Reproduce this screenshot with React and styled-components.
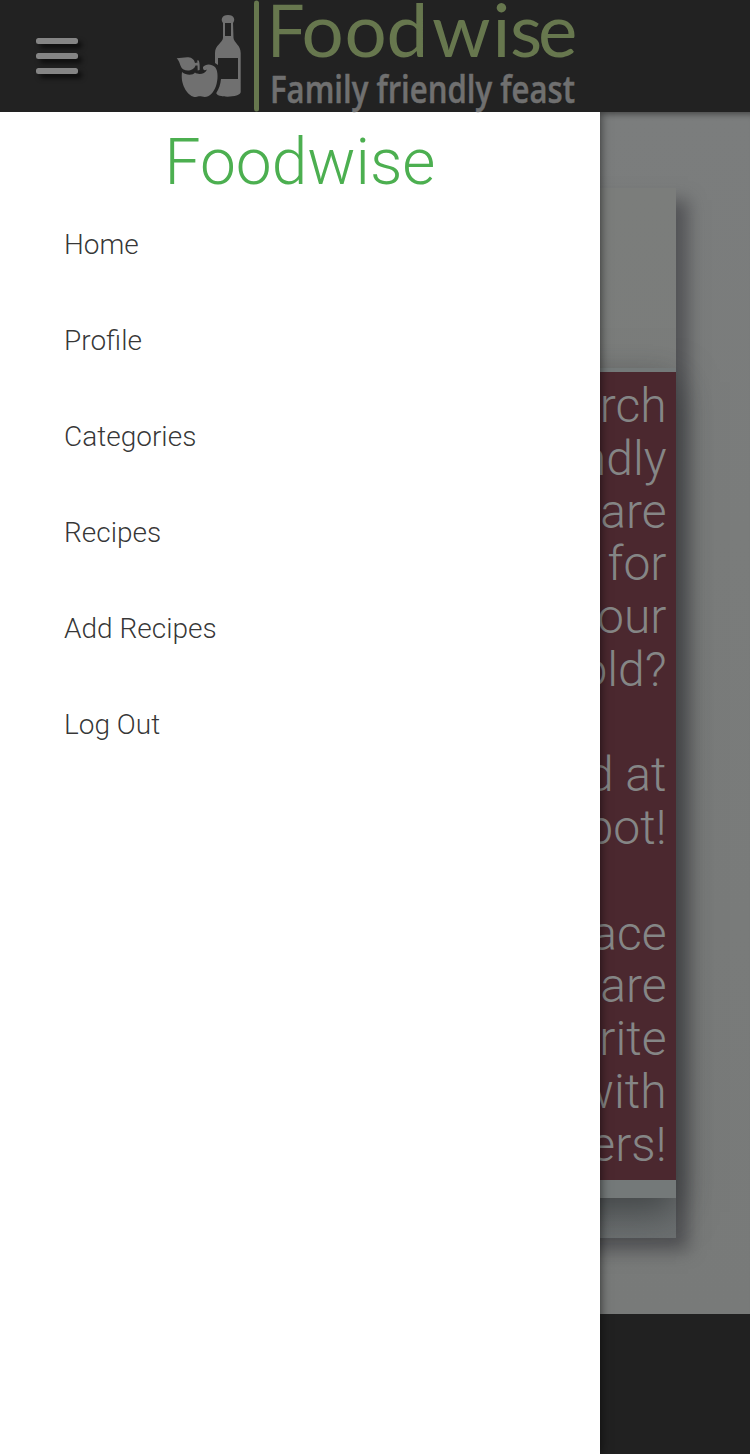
import React from "react";
import styled, { createGlobalStyle } from "styled-components";

const Global = createGlobalStyle`
  *, *::before, *::after { box-sizing: border-box; }
  body { margin: 0; background: #7a7c7b; font-family: Roboto, "Liberation Sans", sans-serif; font-weight: 300; }
`;

const Page = styled.div`
  position: relative;
  display: flex;
  flex-direction: column;
  height: 1454px;
  overflow: hidden;
`;

const Header = styled.header`
  position: relative;
  z-index: 3;
  display: flex;
  align-items: center;
  flex: 0 0 112px;
  padding-left: 36px;
  background: #222;
`;

const MenuButton = styled.button`
  display: flex;
  flex-direction: column;
  gap: 9px;
  width: 42px;
  padding: 0;
  border: 0;
  background: none;
`;

const Bar = styled.span`
  height: 6px;
  border-radius: 2.5px;
  background: #858585;
  box-shadow: 4px 4px 5px rgba(0, 0, 0, 0.65);
`;

const Logo = styled.svg`
  display: block;
  margin-left: 92px;
  overflow: visible;
`;

const Main = styled.main`
  display: flex;
  flex-direction: column;
  flex: 0 0 1202px;
  padding: 76px 74px;
  background: linear-gradient(180deg, #7b7d7d 0%, #7a7c7b 35%, #787a79 100%);
  box-shadow: inset 0 8px 6px -6px rgba(0, 0, 0, 0.45);
`;

const Card = styled.section`
  display: flex;
  flex-direction: column;
  height: 1050px;
  padding: 180px 0 40px;
  background: linear-gradient(180deg, #7b7d7b 0%, #7a7c7c 60%, #6c7071 100%);
  box-shadow: 12px 12px 16px 0 rgba(55, 55, 60, 0.6);
`;

const Panel = styled.div`
  flex: 1;
  padding: 4px 0 18px;
  background: #747979;
  box-shadow: 0 14px 36px rgba(35, 38, 40, 0.6);
`;

const Message = styled.p`
  margin: 0;
  height: 808px;
  padding: 8px 9.5px 8px 8px;
  background: #4b282f;
  color: #858686;
  font-size: 48px;
  line-height: 52.75px;
  text-align: right;
  white-space: pre-line;
`;

const Footer = styled.footer`
  flex: 1;
  background: #212121;
`;

const Drawer = styled.aside`
  position: absolute;
  z-index: 2;
  top: 112px;
  bottom: 0;
  left: 0;
  width: 600px;
  padding-top: 16px;
  background: #fff;
  box-shadow: 0 0 10px rgba(0, 0, 0, 0.65);
`;

const Title = styled.h1`
  margin: 0 0 -2px;
  color: #4caf50;
  font-size: 64px;
  font-weight: 300;
  line-height: 70px;
  text-align: center;
`;

const MenuLink = styled.a`
  display: flex;
  align-items: center;
  height: 96px;
  padding-left: 64px;
  color: rgba(0, 0, 0, 0.8);
  font-size: 28px;
`;

const links = ["Home", "Profile", "Categories", "Recipes", "Add Recipes", "Log Out"];

const message = `search
friendly
are
for
your
household?

found at
spot!

place
share
favorite
with
others!`;

function FoodwiseLogo() {
  return (
    <Logo width="410" height="112" viewBox="170 0 410 112" aria-label="Foodwise">
      <g fill="#707070">
        <path
          fillRule="evenodd"
          d="M223 23C220.500 20 221.500 15 228 15C234.500 15 235.500 20 233 23L233.500 38C234 43 240.700 45 240.700 53V92C240.700 98 216 98 216.300 93C219 89 220.500 84 221 79H238V58H218V65L215 63V53C215 45 222.500 43 223 38ZM225 23V36H231V23Z"
        />
        <path d="M176.700 58.300C182 58.300 188 56 192 58.500C194 59.500 194.500 61.500 195 63L197.600 62.500L197 60.500L198.800 60.500C199.700 63 199.800 66 199.600 70L197.700 70.500L197.500 65.500L195.500 65.500C194 70 188 72 183.500 69.500C179.500 67 180.500 62 176.700 58.300Z" />
        <path d="M182 72C186 75.500 193 75.500 195 72.500C198 75 205 74.500 207 69.500C204.500 71 202.600 70 203 67C205.500 63.500 211.500 63.500 215 67C218.500 71 218 80 216 86C213 94 208 98.500 202 96.500C199 95.700 198 96.500 196 97C189 97.500 180 86 182 72Z" />
      </g>
      <rect x="254" y="0.500" width="5" height="111" rx="2.500" fill="#67774e" />
      <text
        x="266 301.500 344.500 386.500 432 492.500 510 538"
        y="56.500"
        fill="#67774e"
        fontFamily="Lato, sans-serif"
        fontSize="74.500"
        fontWeight="400"
      >
        <tspan fontFamily="Open Sans, sans-serif" fontSize="73.500">F</tspan>oodwise
      </text>
      <text
        x="270"
        y="102.500"
        fill="#707070"
        fontFamily="Open Sans, sans-serif"
        fontSize="38"
        fontWeight="600"
        stroke="#707070"
        strokeWidth="0.500"
        textLength="305"
        lengthAdjust="spacingAndGlyphs"
      >
        Family friendly feast
      </text>
    </Logo>
  );
}

export default function App() {
  return (
    <Page>
      <Global />
      <Header>
        <MenuButton aria-label="Menu">
          <Bar />
          <Bar />
          <Bar />
        </MenuButton>
        <FoodwiseLogo />
      </Header>
      <Drawer>
        <Title>Foodwise</Title>
        <nav>
          {links.map((label) => (
            <MenuLink key={label}>{label}</MenuLink>
          ))}
        </nav>
      </Drawer>
      <Main>
        <Card>
          <Panel>
            <Message>{message}</Message>
          </Panel>
        </Card>
      </Main>
      <Footer />
    </Page>
  );
}
